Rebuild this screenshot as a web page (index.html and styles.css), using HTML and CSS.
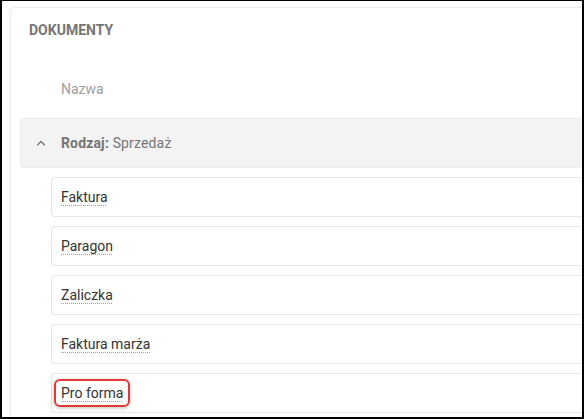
FILE: index.html
```html
<!DOCTYPE html>
<html lang="pl">
<head>
<meta charset="utf-8">
<title>Dokumenty</title>
<link rel="stylesheet" href="styles.css">
</head>
<body>
<div class="frame">
  <div class="card">
    <div class="title">DOKUMENTY</div>
    <div class="colhead">Nazwa</div>
    <div class="group">
      <div class="group-head">
        <svg class="chev" width="10" height="6" viewBox="0 0 10 6"><path d="M1.2 5.2 L5 1.4 L8.8 5.2" fill="none" stroke="#7a7a7a" stroke-width="1.4"/></svg>
        <span class="gname"><b>Rodzaj:</b> Sprzedaż</span>
      </div>
      <div class="rows">
        <div class="row"><span class="label">Faktura</span></div>
        <div class="row"><span class="label">Paragon</span></div>
        <div class="row"><span class="label">Zaliczka</span></div>
        <div class="row"><span class="label">Faktura marża</span></div>
        <div class="row"><span class="label mark">Pro forma</span></div>
      </div>
    </div>
  </div>
</div>
</body>
</html>
```
FILE: styles.css
```css
html, body { margin: 0; padding: 0; background: #fff; }
body { font-family: Roboto, "Noto Sans", Arial, sans-serif; }
.frame {
  width: 584px; height: 419px; box-sizing: border-box;
  border: 2px solid #000; border-top-width: 1px;
  overflow: hidden; background: #fff;
  padding: 7px 0 0 9px;
}
.card {
  width: 640px; height: 460px;
  border-radius: 4px;
  box-shadow: 0 0 3px rgba(0,0,0,0.18), 0 1px 2px rgba(0,0,0,0.06);
  background: #fff;
  padding: 14px 0 0 9px;
  box-sizing: border-box;
}
.title {
  font-size: 14px; line-height: 16px; font-weight: 700; color: #757575;
  padding-left: 9px;
}
.colhead {
  font-size: 14px; line-height: 16px; color: #9e9e9e;
  margin-top: 43px; padding-left: 41px;
}
.group { margin-top: 21px; }
.group-head {
  height: 50px; box-sizing: border-box;
  background: #f3f3f3; border: 1px solid #ececec; border-right: none;
  border-radius: 4px 0 0 4px;
  display: flex; align-items: center;
  font-size: 14px; color: #757575;
}
.chev { margin-left: 15px; margin-right: 15px; }
.gname { letter-spacing: 0.15px; }
.gname b { font-weight: 700; }
.rows { padding-left: 31px; padding-top: 9px; display: flex; flex-direction: column; gap: 9px; }
.row {
  height: 40px; box-sizing: border-box;
  border: 1px solid #e6e6e6; border-right: none;
  border-radius: 4px 0 0 4px;
  display: flex; align-items: center;
  padding-left: 9px;
  font-size: 14px; color: #333;
}
.label {
  text-decoration: underline dotted #a0a0a0;
  text-underline-offset: 3px;
  text-decoration-thickness: 1px;
}
.mark {
  border: 2px solid #e53935; border-radius: 6px;
  padding: 4px 5px;
  margin-left: -7px;
  box-shadow: 0 1px 4px rgba(0,0,0,0.25);
}
```
